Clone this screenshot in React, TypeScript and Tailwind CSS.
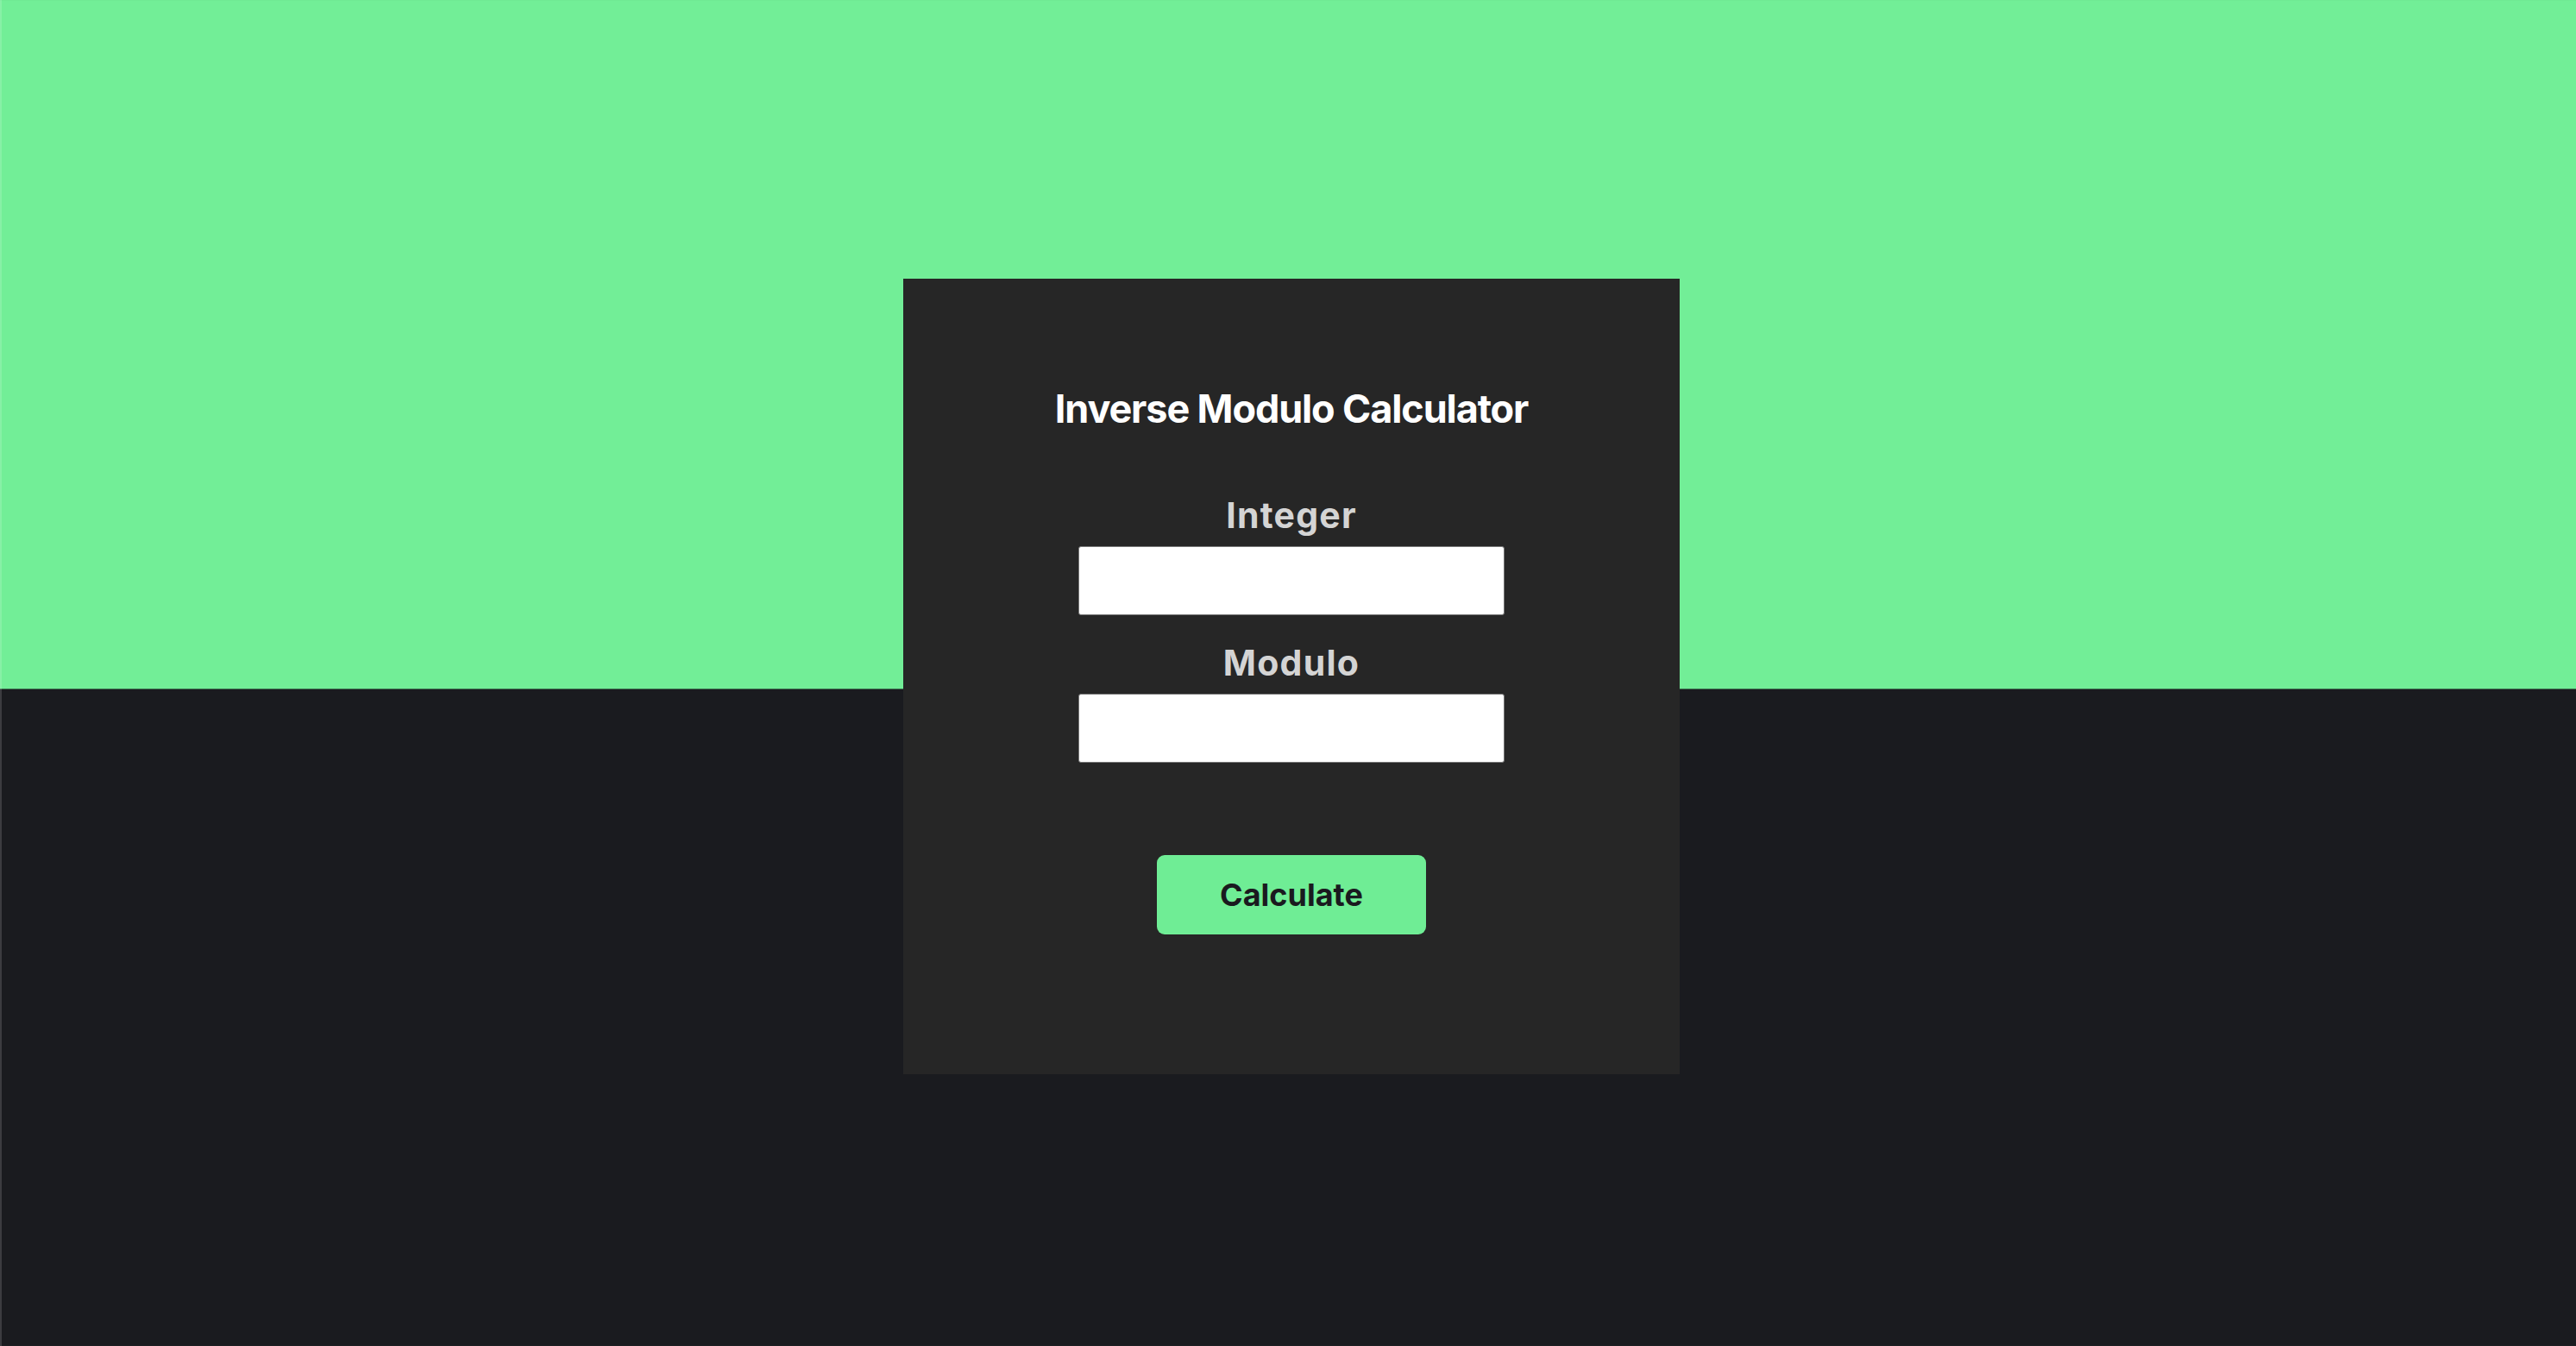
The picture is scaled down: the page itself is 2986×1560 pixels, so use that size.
import React, { useState } from 'react';

export default function App() {
  const [num, setNum] = useState('');
  const [mod, setMod] = useState('');

  return (
    <div className="min-h-screen w-full bg-[linear-gradient(to_bottom,#72ee97_798px,#1a1b1f_798px)] border-l-2 border-white/15 font-['Inter',sans-serif]">
      <div className="pt-[323px] pb-[315px] pl-[6px]">
        {/* Calculator card */}
        <div className="mx-auto w-[900px] h-[922px] bg-[#262626] flex flex-col items-center pt-[128px]">
          <h1 className="text-[45px] leading-[45px] font-bold text-white tracking-[-0.025em]">
            Inverse Modulo Calculator
          </h1>

          <label className="mt-[81px] text-[41px] leading-[41px] font-bold text-[#d4d4d4] tracking-[0.03em]">Integer</label>
          <input
            value={num}
            onChange={e => setNum(e.target.value)}
            className="mt-[15px] w-[494px] h-[80px] bg-white border border-[#767676] rounded-[3px] px-3 text-[32px] text-black outline-none"
          />

          <label className="mt-[35px] text-[41px] leading-[41px] font-bold text-[#d4d4d4] tracking-[0.03em]">Modulo</label>
          <input
            value={mod}
            onChange={e => setMod(e.target.value)}
            className="mt-[15px] w-[494px] h-[80px] bg-white border border-[#767676] rounded-[3px] px-3 text-[32px] text-black outline-none"
          />

          <button className="mt-[107px] w-[312px] h-[92px] rounded-[9px] bg-[#6fed95] text-[#1a1a1f] text-[36px] font-bold">
            Calculate
          </button>
        </div>
      </div>
    </div>
  );
}
